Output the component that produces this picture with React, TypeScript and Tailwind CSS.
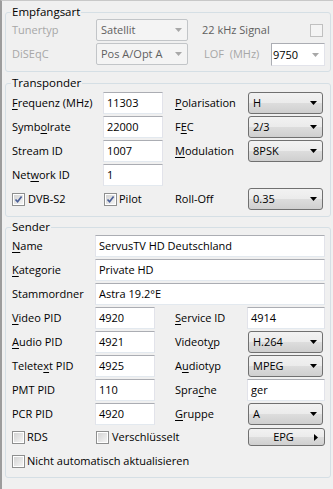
import React from "react";

const Arrow = ({ color = "#000" }: { color?: string }) => (
  <svg width="7" height="4" viewBox="0 0 7 4" className="shrink-0">
    <polygon points="0,0 7,0 3.5,4" fill={color} />
  </svg>
);

const Check = ({ checked = false }: { checked?: boolean }) => (
  <div className="w-[13px] h-[13px] shrink-0 border border-[#8e8f8f] bg-white p-px">
    <div className="w-full h-full bg-[linear-gradient(135deg,#d4d4d4,#f4f4f4)] flex items-center justify-center">
      {checked && (
        <svg width="9" height="9" viewBox="0 0 9 9">
          <path d="M1.5 4.5 L3.6 6.8 L7.6 1.6" stroke="#4a5f97" strokeWidth="1.7" fill="none" />
        </svg>
      )}
    </div>
  </div>
);

const TextBox = ({ value, className }: { value: string; className: string }) => (
  <div
    className={`h-[22px] bg-white border border-[#e2e3ea] border-t-[#abadb3] border-b-[#e3e9ef] pl-[3px] pb-px flex items-center text-black ${className}`}
  >
    {value}
  </div>
);

const Combo = ({ value, className = "w-[75px]" }: { value: string; className?: string }) => (
  <div
    className={`h-[22px] rounded-[3px] border border-[#707070] bg-[linear-gradient(#f2f2f2,#ebebeb_50%,#dddddd_50%,#cfcfcf)] pl-[4px] pr-[5px] flex items-center justify-between text-black ${className}`}
  >
    <span>{value}</span>
    <Arrow />
  </div>
);

const U = ({ children }: { children: React.ReactNode }) => <span className="underline underline-offset-[2px]">{children}</span>;

export default function App() {
  return (
    <div className="w-[333px] h-[489px] bg-[#f0f0f0] border-t border-t-[#c8c8c8] border-l-2 border-l-[#9c9c9c] pt-[4px] pl-[3px] pr-[2px] font-['Open_Sans',sans-serif] text-[11px] leading-[14px] text-black overflow-hidden">
      {/* Empfangsart */}
      <fieldset className="border border-[#d5dfe5] rounded-[3px] pl-[5px] pr-[4px] pb-[5px]">
        <legend className="px-px text-[11.5px]">Empfangsart</legend>
        <div className="pl-px flex flex-col gap-[2px]">
          <div className="flex items-center h-[22px]">
            <span className="w-[84px] text-[#a7a7a7]">Tunertyp</span>
            <div className="w-[92px] h-[22px] rounded-[2px] border border-[#c2c5c8] bg-[#f4f4f4] pl-[4px] pr-[5px] flex items-center justify-between text-[#5f5f5f]">
              <span>Satellit</span>
              <Arrow color="#a8a8a8" />
            </div>
            <span className="ml-[14px] text-[#5f5f5f]">22 kHz Signal</span>
            <div className="ml-auto mr-[3px] w-[13px] h-[13px] border border-[#c0c0c0] bg-[#f4f4f4]" />
          </div>
          <div className="flex items-start h-[23px]">
            <span className="w-[84px] h-[22px] flex items-center text-[#a7a7a7]">DiSEqC</span>
            <div className="w-[92px] h-[22px] rounded-[2px] border border-[#c2c5c8] bg-[#f4f4f4] pl-[4px] pr-[5px] flex items-center justify-between text-[#5f5f5f]">
              <span>Pos A/Opt A</span>
              <Arrow color="#a8a8a8" />
            </div>
            <span className="ml-[16px] w-[67px] h-[22px] flex items-center text-[#a7a7a7] whitespace-pre">LOF  (MHz)</span>
            <div className="w-[54px] h-[23px] bg-white border border-[#e2e3ea] border-t-[#abadb3] border-l-[#abadb3] pl-px pr-[5px] flex items-center justify-between">
              <span>9750</span>
              <Arrow color="#a8a8a8" />
            </div>
          </div>
        </div>
      </fieldset>

      {/* Transponder */}
      <fieldset className="mt-[4px] border border-[#d5dfe5] rounded-[3px] pl-[5px] pr-[4px] pt-[2px] pb-[6px]">
        <legend className="px-px text-[11.5px]">Transponder</legend>
        <div className="pl-px flex flex-col gap-[2px]">
          <div className="flex items-center h-[22px]">
            <span className="w-[91px]"><U>F</U>requenz (MHz)</span>
            <TextBox value="11303" className="w-[60px]" />
            <span className="ml-[12px] w-[73px]"><U>P</U>olarisation</span>
            <Combo value="H" />
          </div>
          <div className="flex items-center h-[22px]">
            <span className="w-[91px]">Symb<U>o</U>lrate</span>
            <TextBox value="22000" className="w-[60px]" />
            <span className="ml-[12px] w-[73px]">F<U>E</U>C</span>
            <Combo value="2/3" />
          </div>
          <div className="flex items-center h-[22px]">
            <span className="w-[91px]">Stream ID</span>
            <TextBox value="1007" className="w-[60px]" />
            <span className="ml-[12px] w-[73px]"><U>M</U>odulation</span>
            <Combo value="8PSK" />
          </div>
          <div className="flex items-center h-[22px]">
            <span className="w-[91px]">Net<U>w</U>ork ID</span>
            <TextBox value="1" className="w-[60px]" />
          </div>
          <div className="flex items-center h-[22px]">
            <div className="w-[92px] flex items-center gap-[3px]">
              <Check checked />
              <span>DVB-S2</span>
            </div>
            <div className="w-[71px] flex items-center gap-[2px]">
              <Check checked />
              <span>Pilot</span>
            </div>
            <span className="w-[73px]">Roll-Off</span>
            <Combo value="0.35" />
          </div>
        </div>
      </fieldset>

      {/* Sender */}
      <fieldset className="mt-[3px] border border-[#d5dfe5] rounded-[3px] pl-[5px] pr-[4px] pt-px pb-[6px]">
        <legend className="px-px text-[11.5px]">Sender</legend>
        <div className="pl-px flex flex-col gap-[2px]">
          <div className="flex items-center h-[22px]">
            <span className="w-[83px]"><U>N</U>ame</span>
            <TextBox value="ServusTV HD Deutschland" className="w-[230px]" />
          </div>
          <div className="flex items-center h-[22px]">
            <span className="w-[83px]"><U>K</U>ategorie</span>
            <TextBox value="Private HD" className="w-[230px]" />
          </div>
          <div className="flex items-center h-[22px]">
            <span className="w-[83px]">Stammordner</span>
            <TextBox value="Astra 19.2°E" className="w-[230px]" />
          </div>
          <div className="flex items-center h-[22px]">
            <span className="w-[83px]"><U>V</U>ideo PID</span>
            <TextBox value="4920" className="w-[60px]" />
            <span className="ml-[20px] w-[72px]"><U>S</U>ervice ID</span>
            <TextBox value="4914" className="w-[78px]" />
          </div>
          <div className="flex items-center h-[22px]">
            <span className="w-[83px]"><U>A</U>udio PID</span>
            <TextBox value="4921" className="w-[60px]" />
            <span className="ml-[20px] w-[73px]">Videot<U>y</U>p</span>
            <Combo value="H.264" />
          </div>
          <div className="flex items-center h-[22px]">
            <span className="w-[83px]">Telete<U>x</U>t PID</span>
            <TextBox value="4925" className="w-[60px]" />
            <span className="ml-[20px] w-[73px]">A<U>u</U>diotyp</span>
            <Combo value="MPEG" />
          </div>
          <div className="flex items-center h-[22px]">
            <span className="w-[83px]">PMT PID</span>
            <TextBox value="110" className="w-[60px]" />
            <span className="ml-[20px] w-[72px]">Spra<U>c</U>he</span>
            <TextBox value="ger" className="w-[78px]" />
          </div>
          <div className="flex items-center h-[22px]">
            <span className="w-[83px]">PCR PID</span>
            <TextBox value="4920" className="w-[60px]" />
            <span className="ml-[20px] w-[73px]"><U>G</U>ruppe</span>
            <Combo value="A" />
          </div>
          <div className="flex items-center h-[20px]">
            <div className="w-[84px] flex items-center gap-[2px]">
              <Check />
              <span>RDS</span>
            </div>
            <div className="w-[152px] flex items-center gap-[3px]">
              <Check />
              <span>Verschlüsselt</span>
            </div>
            <div className="w-[77px] h-[18px] rounded-[3px] border border-[#707070] bg-[linear-gradient(#f2f2f2,#ebebeb_50%,#dddddd_50%,#cfcfcf)] flex items-center pr-[6px]">
              <span className="flex-1 text-center pl-[4px]">EPG</span>
              <svg width="4" height="7" viewBox="0 0 4 7">
                <polygon points="0,0 4,3.5 0,7" fill="#000" />
              </svg>
            </div>
          </div>
          <div className="mt-[2px] flex items-center h-[20px] gap-[2px]">
            <Check />
            <span>Nicht automatisch aktualisieren</span>
          </div>
        </div>
      </fieldset>
    </div>
  );
}
